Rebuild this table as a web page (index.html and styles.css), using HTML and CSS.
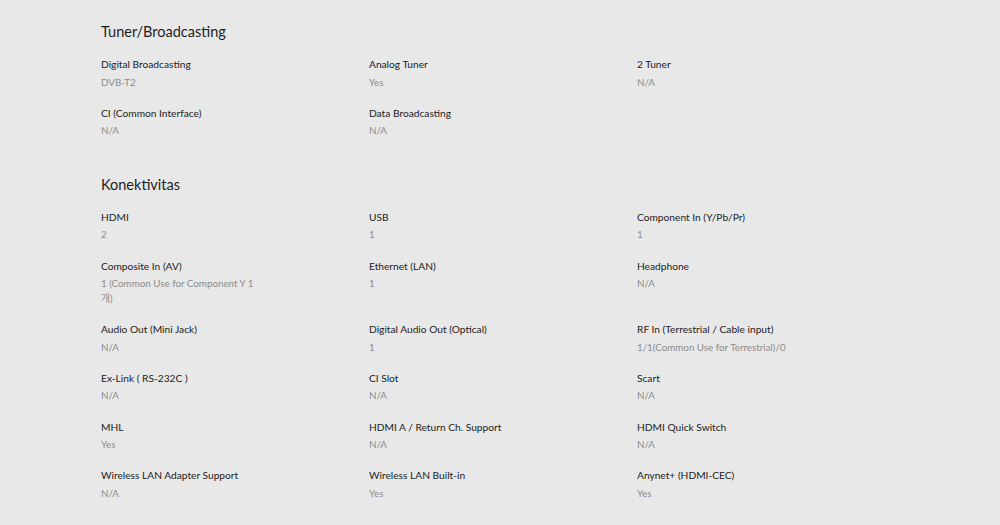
FILE: index.html
```html
<!DOCTYPE html>
<html lang="en">
<head>
<meta charset="utf-8">
<title>Specs</title>
<link rel="stylesheet" href="styles.css">
</head>
<body>
<main class="specs">
  <section class="spec-section">
    <h2 class="spec-title">Tuner/Broadcasting</h2>
    <ul class="spec-grid">
      <li class="spec-item"><p class="spec-label">Digital Broadcasting</p><p class="spec-value">DVB-T2</p></li>
      <li class="spec-item"><p class="spec-label">Analog Tuner</p><p class="spec-value">Yes</p></li>
      <li class="spec-item"><p class="spec-label">2 Tuner</p><p class="spec-value">N/A</p></li>
      <li class="spec-item"><p class="spec-label">CI (Common Interface)</p><p class="spec-value">N/A</p></li>
      <li class="spec-item"><p class="spec-label">Data Broadcasting</p><p class="spec-value">N/A</p></li>
    </ul>
  </section>
  <section class="spec-section">
    <h2 class="spec-title">Konektivitas</h2>
    <ul class="spec-grid">
      <li class="spec-item"><p class="spec-label">HDMI</p><p class="spec-value">2</p></li>
      <li class="spec-item"><p class="spec-label">USB</p><p class="spec-value">1</p></li>
      <li class="spec-item"><p class="spec-label">Component In (Y/Pb/Pr)</p><p class="spec-value">1</p></li>
      <li class="spec-item"><p class="spec-label">Composite In (AV)</p><p class="spec-value">1 (Common Use for Component Y 1 개)</p></li>
      <li class="spec-item"><p class="spec-label">Ethernet (LAN)</p><p class="spec-value">1</p></li>
      <li class="spec-item"><p class="spec-label">Headphone</p><p class="spec-value">N/A</p></li>
      <li class="spec-item"><p class="spec-label">Audio Out (Mini Jack)</p><p class="spec-value">N/A</p></li>
      <li class="spec-item"><p class="spec-label">Digital Audio Out (Optical)</p><p class="spec-value">1</p></li>
      <li class="spec-item"><p class="spec-label">RF In (Terrestrial / Cable input)</p><p class="spec-value">1/1(Common Use for Terrestrial)/0</p></li>
      <li class="spec-item"><p class="spec-label">Ex-Link ( RS-232C )</p><p class="spec-value">N/A</p></li>
      <li class="spec-item"><p class="spec-label">CI Slot</p><p class="spec-value">N/A</p></li>
      <li class="spec-item"><p class="spec-label">Scart</p><p class="spec-value">N/A</p></li>
      <li class="spec-item"><p class="spec-label">MHL</p><p class="spec-value">Yes</p></li>
      <li class="spec-item"><p class="spec-label">HDMI A / Return Ch. Support</p><p class="spec-value">N/A</p></li>
      <li class="spec-item"><p class="spec-label">HDMI Quick Switch</p><p class="spec-value">N/A</p></li>
      <li class="spec-item"><p class="spec-label">Wireless LAN Adapter Support</p><p class="spec-value">N/A</p></li>
      <li class="spec-item"><p class="spec-label">Wireless LAN Built-in</p><p class="spec-value">Yes</p></li>
      <li class="spec-item"><p class="spec-label">Anynet+ (HDMI-CEC)</p><p class="spec-value">Yes</p></li>
    </ul>
  </section>
</main>
</body>
</html>
```
FILE: styles.css
```css
html, body {
  margin: 0;
  padding: 0;
  background: #e8e8e8;
}
body {
  font-family: "Lato", "Noto Sans CJK KR", sans-serif;
  color: #222;
  height: 525px;
  overflow: hidden;
}
.specs {
  padding: 22px 0 0 101px;
  width: 804px;
}
.spec-section {
  margin-bottom: 22.5px;
}
.spec-title {
  margin: 0 0 13px;
  font-size: 14.5px;
  line-height: 20px;
  font-weight: 400;
  color: #1e1e1e;
}
.spec-grid {
  list-style: none;
  margin: 0;
  padding: 0;
  display: grid;
  grid-template-columns: repeat(3, 268px);
}
.spec-item {
  padding-bottom: 14.2px;
  max-width: 160px;
}
.spec-label {
  margin: 0;
  font-size: 10.2px;
  line-height: 18px;
  color: #222;
}
.spec-value {
  margin: 1.5px 0 0;
  font-size: 9.8px;
  line-height: 15px;
  color: #8c8c8c;
}
```
